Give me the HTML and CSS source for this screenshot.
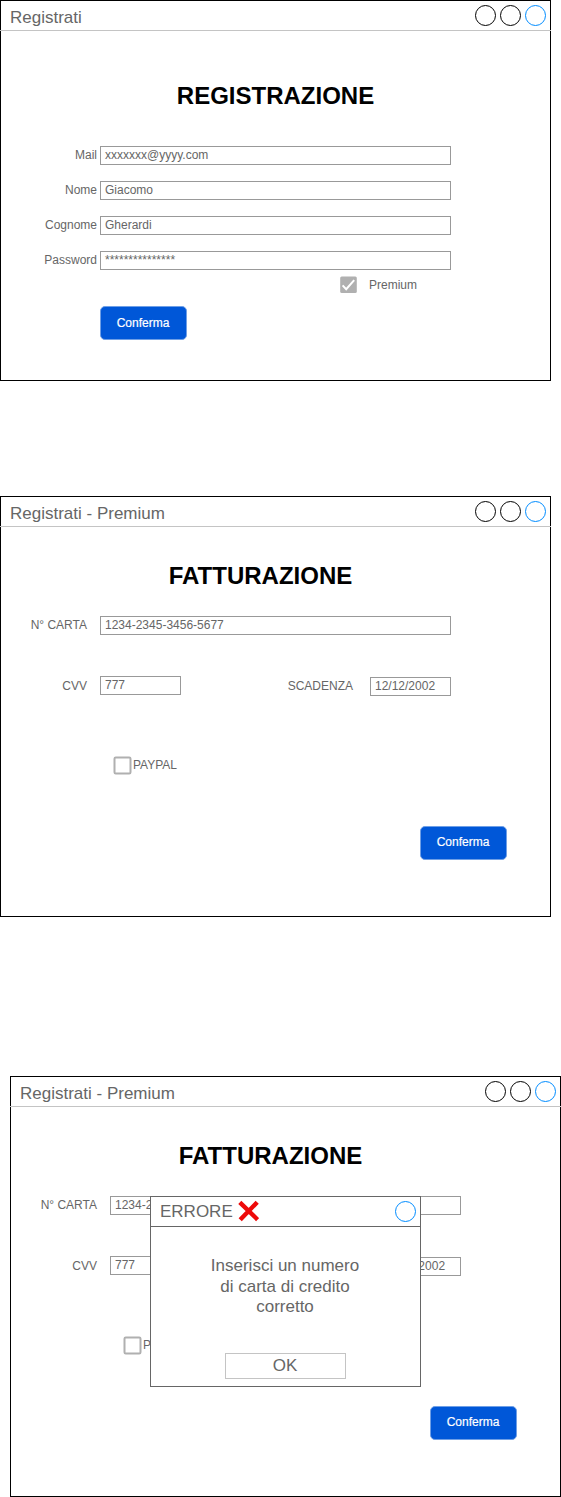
FILE: index.html
```html
<!DOCTYPE html>
<html lang="it">
<head>
<meta charset="utf-8">
<title>Registrati</title>
<link rel="stylesheet" href="styles.css">
</head>
<body>
<main class="board">
  <section class="window window-register">
    <header class="titlebar"><span class="title">Registrati</span><span class="controls"><i class="dot"></i><i class="dot"></i><i class="dot dot-blue"></i></span></header>
    <h1 class="heading">REGISTRAZIONE</h1>
    <div class="fields">
      <div class="row"><span class="label">Mail</span><span class="input">xxxxxxx@yyyy.com</span></div>
      <div class="row"><span class="label">Nome</span><span class="input">Giacomo</span></div>
      <div class="row"><span class="label">Cognome</span><span class="input">Gherardi</span></div>
      <div class="row"><span class="label">Password</span><span class="input">***************</span></div>
    </div>
    <div class="premium">
      <svg class="check-on" width="18" height="18" viewBox="0 0 18 18"><rect x="1.2" y="0.4" width="16.6" height="16.6" rx="1.5" fill="#b0b0b0"/><path d="M3.6 9.4 L7.2 13.2 L15.2 4.1" fill="none" stroke="#fff" stroke-width="2"/></svg>
      <span class="text">Premium</span>
    </div>
    <button class="confirm">Conferma</button>
  </section>

  <section class="window window-billing">
    <header class="titlebar"><span class="title">Registrati - Premium</span><span class="controls"><i class="dot"></i><i class="dot"></i><i class="dot dot-blue"></i></span></header>
    <h1 class="heading">FATTURAZIONE</h1>
    <div class="row"><span class="label">N° CARTA</span><span class="input">1234-2345-3456-5677</span></div>
    <div class="row row-split"><span class="label">CVV</span><span class="input input-short">777</span><span class="label label-expiry">SCADENZA</span><span class="input input-short input-expiry">12/12/2002</span></div>
    <div class="paypal"><svg class="check-off" width="19" height="19" viewBox="0 0 19 19"><rect x="1.5" y="1.5" width="16" height="16" rx="1.2" fill="none" stroke="#b0b0b0" stroke-width="2"/></svg><span class="text">PAYPAL</span></div>
    <button class="confirm">Conferma</button>
  </section>

  <section class="window window-billing window-error">
    <header class="titlebar"><span class="title">Registrati - Premium</span><span class="controls"><i class="dot"></i><i class="dot"></i><i class="dot dot-blue"></i></span></header>
    <h1 class="heading">FATTURAZIONE</h1>
    <div class="row"><span class="label">N° CARTA</span><span class="input">1234-2345-3456-5677</span></div>
    <div class="row row-split"><span class="label">CVV</span><span class="input input-short">777</span><span class="label label-expiry">SCADENZA</span><span class="input input-short input-expiry">12/12/2002</span></div>
    <div class="paypal"><svg class="check-off" width="19" height="19" viewBox="0 0 19 19"><rect x="1.5" y="1.5" width="16" height="16" rx="1.2" fill="none" stroke="#b0b0b0" stroke-width="2"/></svg><span class="text">PAYPAL</span></div>
    <button class="confirm">Conferma</button>
    <div class="dialog">
      <header class="titlebar"><span class="title">ERRORE</span><svg class="cross" width="22" height="22" viewBox="0 0 22 22"><path d="M2.8 2.4 L20.6 19.6 M20.2 2.2 L3.2 19.8" stroke="#ee0a0a" stroke-width="4.4"/></svg><span class="controls"><i class="dot dot-blue"></i></span></header>
      <p class="message">Inserisci un numero<br>di carta di credito<br>corretto</p>
      <button class="ok">OK</button>
    </div>
  </section>
</main>
</body>
</html>
```
FILE: styles.css
```css
* { box-sizing: border-box; }
body {
  margin: 0;
  background: #fff;
  color: #666;
  font: 12px/14px "Liberation Sans", Arial, sans-serif;
}
.board {
  display: flex;
  flex-direction: column;
  width: 561px;
  height: 1497px;
}
.window {
  display: flex;
  flex-direction: column;
  position: relative;
  width: 551px;
  border: 1px solid #000;
  flex: none;
}
.window-register { height: 381px; }
.window-billing { height: 421px; margin-top: 115px; }
.window-error { margin: 159px 0 0 10px; }

.titlebar {
  display: flex;
  align-items: flex-start;
  flex: none;
  height: 30px;
  margin: 0 -1px;
  padding: 4px 5px 0 10px;
  border-bottom: 1px solid #c4c4c4;
}
.title { font-size: 17px; line-height: 26px; }
.controls { display: flex; gap: 4px; margin-left: auto; }
.dot {
  width: 21px;
  height: 21px;
  border: 1px solid #000;
  border-radius: 50%;
}
.dot-blue { border-color: #008cff; }

.heading {
  width: 549px;
  margin: 51px 0 36px;
  color: #000;
  font-size: 24px;
  line-height: 28px;
  text-align: center;
}
.window-billing .heading { width: 519px; margin: 35px 0 26px; }

.fields { display: flex; flex-direction: column; gap: 16px; }
.row { display: flex; align-items: flex-start; height: 19px; }
.label { width: 96px; padding-top: 2px; text-align: right; }
.input {
  width: 351px;
  height: 19px;
  margin-left: 3px;
  padding: 1px 0 0 4px;
  border: 1px solid #999;
}
.window-billing .label { width: 86px; }
.window-billing .input { margin-left: 13px; }
.row-split { height: 20px; margin-top: 41px; }
.row-split .label { padding-top: 3px; }
.window-billing .input-short { width: 81px; }
.window-billing .label-expiry { width: 172px; }
.window-billing .input-expiry { margin: 1px 0 0 17px; }

.premium { display: flex; align-items: center; height: 18px; margin: 6px 0 0 338px; gap: 12px; }
.paypal { display: flex; align-items: flex-start; height: 19px; margin: 60px 0 0 112px; gap: 1px; }
.paypal .text { padding-top: 2px; }

.confirm {
  width: 87px;
  height: 34px;
  margin: 12px 0 0 99px;
  padding: 0 1px 0 0;
  border: 1px solid #6f9fe6;
  border-radius: 5px;
  background: #0057d8;
  color: #fff;
  font: 12px/14px "Liberation Sans", Arial, sans-serif;
  -webkit-text-stroke: 0.2px #fff;
}
.window-billing .confirm { margin: 51px 0 0 419px; padding-bottom: 2px; }

/* Error dialog shown over the billing form */
.dialog {
  position: absolute;
  left: 139px;
  top: 119px;
  display: flex;
  flex-direction: column;
  align-items: center;
  width: 271px;
  height: 191px;
  border: 1px solid #666;
  background: #fff;
}
.dialog .titlebar { width: 271px; border-color: #666; }
.dialog .title { line-height: 22px; }
.cross { margin: -1px 0 0 4px; }
.message { width: 268px; margin: 29px 1px 0 0; font-size: 17px; line-height: 20.5px; text-align: center; }
.ok {
  width: 121px;
  height: 26px;
  margin-top: 35.5px;
  padding: 0 1px 0 0;
  border: 1px solid #c4c4c4;
  background: #fff;
  color: #666;
  font: 17px/20px "Liberation Sans", Arial, sans-serif;
}
```
